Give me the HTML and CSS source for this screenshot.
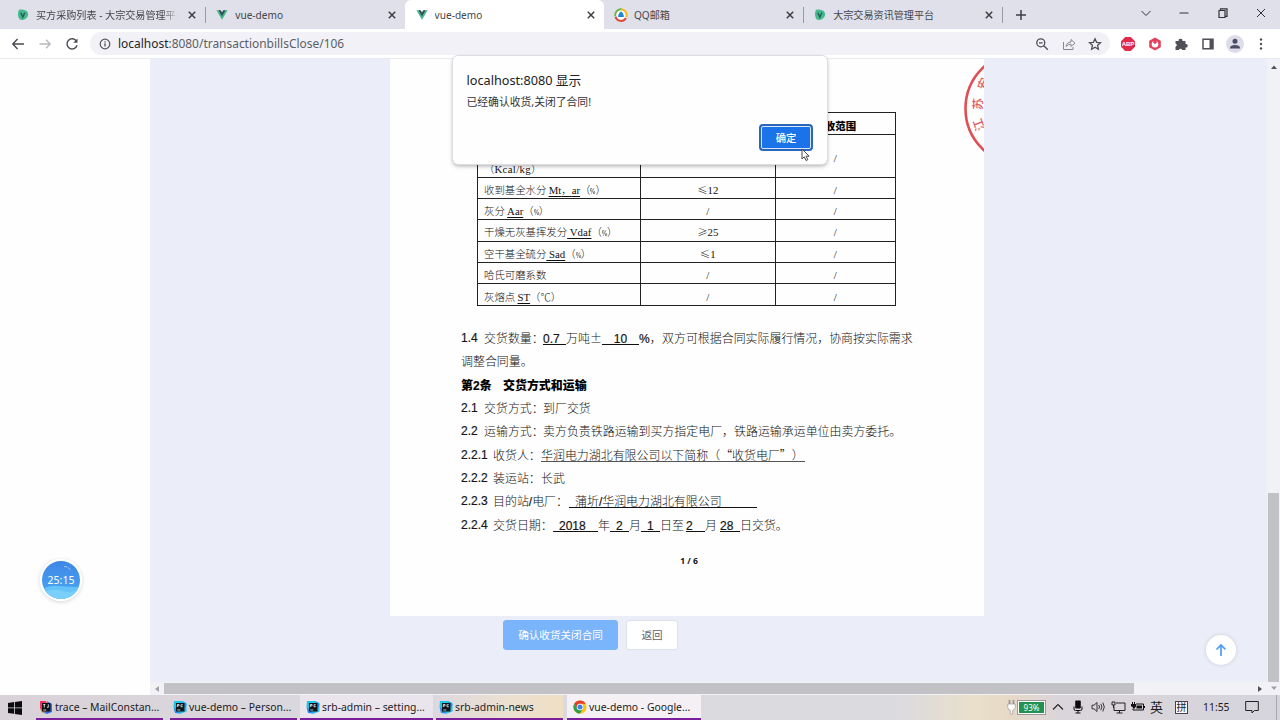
FILE: index.html
```html
<!DOCTYPE html>
<html lang="zh-CN">
<head>
<meta charset="utf-8">
<title>vue-demo</title>
<link rel="stylesheet" href="styles.css">
</head>
<body>
<svg class="defs" width="0" height="0">
  <symbol id="x" viewBox="0 0 10 10"><path d="M1.800 1.800l6.400 6.400M8.200 1.800L1.800 8.200" stroke="#3c3e44" stroke-width="1.500" fill="none"/></symbol>
  <symbol id="vue" viewBox="0 0 14 12"><path d="M0.500 0.500h4L7 4.500l2.500-4h4L7 11.500z" fill="#42b883"/><path d="M3 .5h2.500L7 3 8.500.5H11L7 7.500z" fill="#35495e"/></symbol>
  <symbol id="blob" viewBox="0 0 12 12"><path d="M2 .8Q7 0 10 2.200Q12.500 6 9.500 9Q6 12 2.500 10.200Q-.3 6 2 .8z" fill="#45b88c"/><path d="M3.800 3.700L5.800 8l2-4.300" stroke="#245c56" stroke-width="1.400" fill="none"/></symbol>
  <symbol id="pc" viewBox="0 0 14 14"><path d="M1 3l4-2 1 3z" fill="#1f8fe8"/><path d="M1 1h8l4.500 2v8.500L8 13.500 2 12 .5 6z" fill="#20c5e8"/><path d="M9 1l4.500 3-1 4zM.5 7L2 13l6 .8z" fill="#2390f0"/><rect x="3" y="3" width="8.500" height="8.500" fill="#10151b"/><path d="M4.300 7V4.500h1.800v1.300H4.300M9.800 4.700H8v2h1.800M4.300 10h3" stroke="#e8f4f5" stroke-width=".8" fill="none"/></symbol>
</svg>

<header class="tabs">
  <div class="tab"><svg class="fav"><use href="#blob"/></svg><span class="name fade">买方采购列表 - 大宗交易管理平台</span><svg class="close"><use href="#x"/></svg></div>
  <div class="tab plain"><svg class="fav"><use href="#vue"/></svg><span class="name">vue-demo</span><svg class="close"><use href="#x"/></svg></div>
  <div class="tab active"><svg class="fav"><use href="#vue"/></svg><span class="name">vue-demo</span><svg class="close"><use href="#x"/></svg></div>
  <div class="tab"><svg class="fav big" viewBox="0 0 14 14"><circle cx="7" cy="7" r="6.500" fill="#fff"/><g fill="none" stroke-width="2"><path d="M1.300 8A5.700 5.700 0 0 1 8 1.400" stroke="#6cb33e"/><path d="M7 1.300A5.700 5.700 0 0 1 12.300 9" stroke="#f5b322"/><path d="M12 10A5.700 5.700 0 0 1 1.500 8.500" stroke="#dc4a32"/></g><path d="M7 3.500q3 2 2.800 5.500H4.200Q4 5.500 7 3.500z" fill="#1d86d8"/></svg><span class="name">QQ邮箱</span><svg class="close"><use href="#x"/></svg></div>
  <div class="tab"><svg class="fav"><use href="#blob"/></svg><span class="name">大宗交易资讯管理平台</span><svg class="close"><use href="#x"/></svg></div>
  <svg class="plus" viewBox="0 0 12 12"><path d="M6 1v10M1 6h10" stroke="#3c3e44" stroke-width="1.500"/></svg>
  <div class="win">
    <svg viewBox="0 0 12 12"><path d="M1.500 4L6 8.500 10.500 4" /></svg>
    <svg viewBox="0 0 12 12"><path d="M1.500 6h9"/></svg>
    <svg viewBox="0 0 12 12"><path d="M2 3.500h6v7H2zM3.500 3.500V1.800h6.500v7.500H8" stroke-width="1.200"/></svg>
    <svg viewBox="0 0 12 12"><path d="M2 2l8 8M10 2l-8 8"/></svg>
  </div>
</header>

<div class="toolbar">
  <div class="nav">
    <svg viewBox="0 0 14 14"><path d="M13 7H2M6.500 2L1.800 7l4.700 5" stroke="#4a4c52"/></svg>
    <svg viewBox="0 0 14 14"><path d="M1.500 7h10.500M8 2.800L12.200 7 8 11.200" stroke="#b9bac0"/></svg>
    <svg viewBox="0 0 14 14"><path d="M11.300 4A5.100 5.100 0 1 0 12 8.200" stroke="#4a4c52"/><path d="M12.500 1.500v4.200H8.300z" fill="#4a4c52" stroke="none"/></svg>
  </div>
  <div class="omnibox">
    <svg class="info" viewBox="0 0 12 12"><circle cx="6" cy="6" r="4.800" fill="none" stroke="#55575d" stroke-width="1.200"/><path d="M6 5.300v3.200M6 3.300v1.200" stroke="#55575d" stroke-width="1.300"/></svg>
    <span class="url"><b>localhost</b>:8080/transactionbillsClose/106</span>
    <div class="tools">
      <svg viewBox="0 0 14 14"><circle cx="5.800" cy="5.800" r="4"/><path d="M8.800 8.800l4 4M4 5.800h3.600"/></svg>
      <svg viewBox="0 0 14 14"><path d="M1.500 5v7.500h9.500V10M4 9.500q.8-4.300 5-4.500V2.500L13 6.200 9 9.500V7.200Q6 7 4 9.500z" stroke="#85878d" stroke-width="1"/></svg>
      <svg viewBox="0 0 14 14"><path d="M7 1.800l1.600 3.500 3.900.4-2.900 2.600.8 3.900L7 10.200l-3.400 2 .8-3.900L1.500 5.700l3.900-.4z"/></svg>
    </div>
  </div>
  <div class="ext">
    <svg viewBox="0 0 14 14"><path d="M4.200 0h5.600L14 4.200v5.600L9.800 14H4.200L0 9.800V4.200z" fill="#e02a4c"/><text x="7" y="9.300" text-anchor="middle">ABP</text></svg>
    <svg viewBox="0 0 14 14"><path d="M7 .5l5.800 3.200v6.600L7 13.500 1.200 10.300V3.700z" fill="#e5405c"/><circle cx="7" cy="7.200" r="3.300" fill="#fff"/><path d="M5.300 2h3.400v3.500L7 7.300 5.300 5.500z" fill="#e5405c"/></svg>
    <svg viewBox="0 0 14 14"><path d="M1.500 4h3.200a1.900 1.900 0 1 1 3.700 0H11.500v3a1.800 1.800 0 1 1 0 3.500v2.500H8.200a1.700 1.700 0 0 0-3.300 0H1.500V9.700a1.700 1.700 0 0 0 0-3.300z" fill="#505158"/></svg>
    <svg viewBox="0 0 14 14"><path d="M2 2.200h10v9.600H2z" fill="#fff" stroke="#505158" stroke-width="1.500"/><path d="M8.500 2.200H12v9.600H8.500z" fill="#505158"/></svg>
    <svg class="user" viewBox="0 0 18 18"><circle cx="9" cy="9" r="9" fill="#dddde9"/><circle cx="9" cy="6.200" r="2.500" fill="#4b4d63"/><path d="M4 13.500v-1Q4.500 10 9 10t5 2.500v1z" fill="#4b4d63"/></svg>
    <svg viewBox="0 0 14 14" fill="#505158"><circle cx="7" cy="2.500" r="1.200"/><circle cx="7" cy="7" r="1.200"/><circle cx="7" cy="11.500" r="1.200"/></svg>
  </div>
</div>

<main class="view">
  <aside class="side"></aside>
  <section class="stage">
    <div class="content">
      <article class="paper">
        <svg class="stamp" width="22" height="100" viewBox="962 59 22 100">
          <circle cx="1022" cy="108.500" r="56.500" fill="none" stroke="#df4d55" stroke-width="2.600"/>
          <g fill="#df5a60"><text transform="translate(985 91) rotate(-66)">安</text><text transform="translate(982 110) rotate(-88)">苏</text><text transform="translate(985 129) rotate(-110)">江</text></g>
        </svg>
        <table class="spec">
          <tr class="head"><th></th><th></th><th>拒收范围</th></tr>
          <tr class="tall"><td class="unit">（<i>Kcal/kg</i>）</td><td></td><td><i>/</i></td></tr>
          <tr><td>收到基全水分 <u><i>Mt</i>，<i>ar</i></u>（<i class="pct">%</i>）</td><td>≤<i>12</i></td><td><i>/</i></td></tr>
          <tr><td>灰分 <u><i>Aar</i></u>（<i class="pct">%</i>）</td><td><i>/</i></td><td><i>/</i></td></tr>
          <tr><td>干燥无灰基挥发分<u><i>&nbsp;Vdaf</i></u>（<i class="pct">%</i>）</td><td>≥<i>25</i></td><td><i>/</i></td></tr>
          <tr><td>空干基全硫分<u><i>&nbsp;Sad</i></u>（<i class="pct">%</i>）</td><td>≤<i>1</i></td><td><i>/</i></td></tr>
          <tr><td>哈氏可磨系数</td><td><i>/</i></td><td><i>/</i></td></tr>
          <tr><td>灰熔点 <u><i>ST</i></u>（℃）</td><td><i>/</i></td><td><i>/</i></td></tr>
        </table>
        <div class="clauses">
          <p class="qty"><b>1.4</b><span>交货数量：</span><u><b>0.7</b></u><span>万吨±</span><u class="mid"><b>10</b></u><span><b>%</b>，</span><span>双方可根据合同实际履行情况，协商按实际需求</span></p>
          <p><span>调整合同量。</span></p>
          <p class="title"><span>第<b>2</b>条</span><span>交货方式和运输</span></p>
          <p class="two"><b>2.1</b><span>交货方式：</span><span>到厂交货</span></p>
          <p class="two"><b>2.2</b><span>运输方式：</span><span>卖方负责铁路运输到买方指定电厂，铁路运输承运单位由卖方委托。</span></p>
          <p class="three"><b>2.2.1</b><span>收货人：</span><u class="thin">华润电力湖北有限公司以下简称（<span class="ql">“</span>收货电厂<span class="qr">”</span>）</u></p>
          <p class="three"><b>2.2.2</b><span>装运站：</span><span>长武</span></p>
          <p class="dest"><b>2.2.3</b><span>目的站<b>/</b>电厂：</span><u class="pad">蒲圻<b>/</b>华润电力湖北有限公司</u></p>
          <p class="date"><b>2.2.4</b><span>交货日期：</span><u class="pad"><b>2018</b></u><span>年</span><u class="pad"><b>2</b></u><span>月</span><u class="pad"><b>1</b></u><span>日至</span><u><b>2</b></u><span>月</span><u><b>28</b></u><span>日交货。</span></p>
        </div>
        <footer>1 / 6</footer>
      </article>
      <div class="actions"><button class="primary">确认收货关闭合同</button><button>返回</button></div>
    </div>
    <div class="hbar"><svg viewBox="0 0 8 8"><path d="M6 1v6L2 4z" fill="#a0a0a6"/></svg><span class="track"><span class="thumb"></span></span><svg viewBox="0 0 8 8"><path d="M2 1v6l4-3z" fill="#505056"/></svg></div>
  </section>
  <div class="vbar"><svg viewBox="0 0 8 8"><path d="M1 6h6L4 2.500z" fill="#505056"/></svg><span class="thumb"></span><svg viewBox="0 0 8 8"><path d="M1 2.500h6L4 6z" fill="#a0a0a6"/></svg></div>
</main>

<div class="dialog">
  <h1>localhost:8080 显示</h1>
  <p>已经确认收货,关闭了合同!</p>
  <button>确定</button>
</div>
<svg class="cursor" viewBox="0 0 10 14"><path d="M1 1v10l2.300-2.200 1.700 3.700 1.800-.8-1.700-3.500h3z" fill="#fff" stroke="#333" stroke-width=".9"/></svg>

<div class="timer"><svg viewBox="0 0 38 38"><defs><linearGradient id="sky" x2="0" y2="1"><stop offset="0" stop-color="#3f86e6"/><stop offset="1" stop-color="#4aa9f2"/></linearGradient><clipPath id="disc"><circle cx="19" cy="19" r="19"/></clipPath></defs><g clip-path="url(#disc)"><path d="M0 0h38v38H0z" fill="url(#sky)"/><path d="M0 28q8-4 17-3t21 1v12H0z" fill="#66c3fa"/><path d="M3 31q8-4 17-1t18-2v10H3z" fill="#7bcffb"/></g><path d="M22 5.500q4 0 7 4" stroke="#a9d0fa" stroke-dasharray="3 1" fill="none"/></svg><span>25:15</span></div>
<div class="totop"><svg viewBox="0 0 14 14"><path d="M7 13V2M2.500 6.500L7 2l4.500 4.500" fill="none" stroke="#4b9cf5" stroke-width="1.700"/></svg></div>

<footer class="taskbar">
  <svg class="start" viewBox="0 0 14 14"><path d="M0 2l6-.9v5.400H0zM6.800 1L14 0v6.500H6.800zM0 7.300h6v5.500L0 12zM6.800 7.300H14V14l-7.200-1z" fill="#0b0b0d"/></svg>
  <div class="task t1"><svg viewBox="0 0 14 14"><path d="M1 1h6l2 6-6 5-2-4z" fill="#f0345f"/><path d="M8 1l5 3v8l-5 2-5-2 6-5z" fill="#2a72ee"/><path d="M1 9l3 4 3-1z" fill="#f78b2c"/><rect x="3" y="3" width="8.500" height="8.500" fill="#111"/><path d="M4.300 4.500h2M5.300 4.500v3M9.300 4.300v3H8M4.300 10h3" stroke="#fff" stroke-width=".8" fill="none"/></svg><span>trace – MailConstan...</span></div>
  <div class="task t2"><svg><use href="#pc"/></svg><span>vue-demo – Person...</span></div>
  <div class="task t3"><svg><use href="#pc"/></svg><span>srb-admin – setting...</span></div>
  <div class="task t4"><svg><use href="#pc"/></svg><span>srb-admin-news</span></div>
  <div class="task t5"><svg viewBox="0 0 14 14"><circle cx="7" cy="7" r="6.600" fill="#fbc116"/><path d="M1.300 3.700A6.600 6.600 0 0 1 12.700 3.700H7L4.200 8.600z" fill="#e2402f"/><path d="M1.300 3.700L4.200 8.600 7 10.200 9.800 8.600 7 13.600A6.600 6.600 0 0 1 1.300 3.700z" fill="#2f9e4f"/><circle cx="7" cy="7" r="3.200" fill="#fff"/><circle cx="7" cy="7" r="2.500" fill="#3f7fe8"/></svg><span>vue-demo - Google...</span></div>
  <div class="tray">
    <svg class="plug" viewBox="0 0 9 16"><path d="M2.500 1v4M6.500 1v4" stroke="#999" stroke-width="1.800"/><path d="M.8 5h7.400v3.500q-.5 2.500-2.500 2.700V15H3.300v-3.800Q1.300 11 .8 8.500z" fill="#fff" stroke="#999" stroke-width=".7"/></svg>
    <span class="power">93%</span>
    <svg class="up" viewBox="0 0 12 12"><path d="M1 8.500L6 3.500l5 5" fill="none" stroke="#222" stroke-width="1.100"/></svg>
    <svg class="mic" viewBox="0 0 10 14"><rect x="2.200" y="0.500" width="5.600" height="8" rx="1" fill="#0b0b0d"/><path d="M1 6.500V9q0 1.500 1.500 1.500h5Q9 10.500 9 9V6.500M5 10.500V13M2.500 13h5" fill="none" stroke="#0b0b0d"/></svg>
    <svg class="vol" viewBox="0 0 14 12"><path d="M1 4.200h2L6 1.500v9L3 7.800H1zM7.800 4q1.400 2 0 4M9.800 2.800q2.200 3.200 0 6.400M11.800 1.500q3 4.500 0 9" fill="none" stroke="#222" stroke-width=".9"/></svg>
    <svg class="net" viewBox="0 0 15 13"><path d="M5 2h9v7.500H3V5.500M8.500 9.500V12M5.500 12h6M1 1h3v3H1zM2.500 4v3" fill="none" stroke="#222"/></svg>
    <svg class="bat" viewBox="0 0 14 12"><path d="M5 3h7.500v6H2V7.500" fill="none" stroke="#111"/><path d="M5.500 4.500H11v3H5.500zM13 5h1v2h-1zM0 3h5v2.500L3 8 1 5.500H0zM1 1h1v2H1zM3 1h1v2H3z" fill="#111"/></svg>
    <span class="lang">英</span><span class="ime">拼</span><span class="clock">11:55</span>
    <svg class="note" viewBox="0 0 14 14"><path d="M.7 1.500h12.600v9H9.500L7 13V10.500H.7z" fill="none" stroke="#222"/></svg>
    <i class="peek"></i>
  </div>
</footer>
</body>
</html>
```
FILE: styles.css
```css
* { box-sizing: border-box; }
body { margin: 0; width: 1280px; height: 720px; overflow: hidden; display: flex; flex-direction: column; background: #fff; color: #34363b; font-family: "Noto Sans", "Noto Sans CJK SC", sans-serif; font-size: 10.5px; }
svg { display: block; flex: none; }
.defs { display: none; }
p, h1 { margin: 0; }
button { font: inherit; }

.tabs { height: 29px; flex: none; display: flex; align-items: stretch; padding-left: 6px; background: #dfe0e9; }
.tab { width: 199.300px; display: flex; align-items: center; padding: 0 7px 0 11px; position: relative; border-right: 1px solid transparent; }
.tab::after { content: ""; position: absolute; right: -2px; top: 7px; width: 1px; height: 16px; background: #999aa3; }
.tab.plain::after, .tab.active::after { display: none; }
.tab.active { background: #fff; border-radius: 6px 6px 0 0; }
.fav { width: 12px; height: 12px; }
.fav.big { width: 14px; height: 14px; margin: 0 -1px; }
.name { flex: 1; margin-left: 7px; white-space: nowrap; overflow: hidden; font-size: 10.100px; color: #44464c; }
.fade { margin-right: 8px; -webkit-mask-image: linear-gradient(90deg, #000 88%, transparent); mask-image: linear-gradient(90deg, #000 88%, transparent); }
.close { width: 10px; height: 10px; }
.plus { width: 12px; height: 12px; align-self: center; margin-left: 13px; }
.win { margin-left: auto; display: flex; gap: 26.300px; padding: 7px 13px 0 0; }
.win svg { width: 12px; height: 12px; fill: none; stroke: #303238; }

.toolbar { height: 29px; flex: none; display: flex; align-items: center; background: #fff; padding-left: 11px; }
.nav { display: flex; gap: 13px; width: 79px; }
.nav svg { width: 14px; height: 14px; fill: none; stroke-width: 1.400; }
.omnibox { width: 1020px; height: 23px; border-radius: 12px; background: #f1f1f7; display: flex; align-items: center; padding: 0 8px; }
.info { width: 12px; height: 12px; margin: 0 7px 0 1px; }
.url { font-size: 11.950px; color: #5c5e65; }
.url b { font-weight: 400; color: #24262b; }
.tools { margin-left: auto; display: flex; gap: 12.500px; }
.tools svg { width: 14px; height: 14px; fill: none; stroke: #4d4f55; stroke-width: 1.300; }
.ext { display: flex; align-items: center; gap: 12.700px; margin-left: 11px; }
.ext svg { width: 14px; height: 14px; }
.ext .user { width: 18px; height: 18px; margin: 0 -2px; }
.ext text { font: bold 6px "Liberation Sans", sans-serif; fill: #fff; }

.view { height: 637px; flex: none; display: flex; border-top: 1px solid #e9e9f2; }
.side { width: 150px; background: #fefefe; }
.stage { width: 1117px; background: #ebedf8; display: flex; flex-direction: column; }
.content { flex: 1; padding-left: 240px; }
.paper { width: 594px; height: 557px; background: #fefefe; padding: 53px 0 0 87px; position: relative; color: #111; font-family: "Noto Sans CJK SC", sans-serif; }
.stamp { position: absolute; right: 0; top: 0; }
.stamp text { font: 500 12px "Noto Sans CJK SC", sans-serif; }
.spec { width: 419px; table-layout: fixed; border-collapse: collapse; font-size: 10.400px; font-weight: 300; line-height: 14px; }
.spec th, .spec td { border: 1px solid #222; padding: 4px 0 0; text-align: center; }
.spec tr { height: 21.400px; }
.spec .head { height: 22px; }
.spec .head th { font-weight: 900; color: #000; }
.spec .tall { height: 42.500px; }
.spec .tall .unit { vertical-align: bottom; padding-bottom: 1px; }
.spec .unit i { letter-spacing: .35px; }
.spec th:nth-child(1) { width: 163px; }
.spec th:nth-child(2) { width: 134.500px; }
.spec td:first-child { text-align: left; padding-left: 6px; white-space: pre; }
.spec i { font: 400 10.800px/12px "Liberation Serif", serif; }
.spec .pct { display: inline-block; font-size: 9px; width: 5.200px; transform: scaleX(.72); transform-origin: 0 50%; }
.spec u { text-underline-offset: 2px; }

.clauses { padding-top: 20.500px; margin-left: -4px; font-size: 11.950px; font-weight: 300; }
.clauses p { display: grid; height: 23.350px; margin-left: -12px; white-space: nowrap; align-items: start; padding-top: 5.500px; line-height: 12px; }
.clauses b { font: 400 12px/12px "Liberation Sans", sans-serif; -webkit-text-stroke: .2px #222; }
.clauses u { text-decoration: none; height: 13px; border-bottom: 1.500px solid #111; }
.clauses .thin { border-bottom: 1px solid #555; }
.ql, .qr { display: inline-block; width: 12px; }
.ql { text-align: right; }
.clauses .mid { text-align: center; }
.clauses .pad { padding-left: 6px; }
.clauses .qty { grid-template-columns: 23px 59px 23px 36px 37px 23px auto; }
.clauses .title { grid-template-columns: 42px auto; font-weight: 900; color: #000; }
.clauses .title b { font-weight: 700; }
.clauses .two { grid-template-columns: 23px 59px auto; }
.clauses .three { grid-template-columns: 32px 48px 264px; }
.clauses .dest { grid-template-columns: 32px 76px 188px; }
.clauses .date { grid-template-columns: 32px 60px 45px 12px 19px 12px 19px 26px 19px 15px 20px auto; }
.paper footer { margin: 18px 0 0 -87px; padding-left: 4px; text-align: center; font: 700 8.500px/14px "Open Sans", sans-serif; color: #111; }
.actions { display: flex; gap: 8px; padding: 4px 0 0 113px; }
.actions button { width: 52px; height: 30px; padding: 0 0 1px; border: 1px solid #dfe1ea; border-radius: 3px; background: #fff; color: #606266; font-size: 10.600px; }
.actions .primary { width: 115px; border-color: #7ab4fa; background: #7ab4fa; color: #fff; }

.hbar { height: 13px; display: flex; align-items: center; background: #f2f2f6; }
.hbar svg { width: 8px; height: 8px; margin: 0 3px; }
.track { flex: 1; height: 11px; }
.hbar .thumb { display: block; width: 970px; height: 11px; background: #c1c1c6; }
.vbar { width: 13px; background: #f2f2f6; display: flex; flex-direction: column; align-items: center; padding: 4px 0 3px; }
.vbar svg { width: 8px; height: 8px; }
.vbar .thumb { width: 11px; height: 189px; margin: auto 0 2px; background: #c1c1c6; }

.dialog { position: absolute; left: 453px; top: 56px; width: 374px; height: 108px; padding: 15px 14px 0 13.500px; border-radius: 5px; background: #fefefe; box-shadow: 0 0 0 1px #dcdce3, 0 2px 4px #0005; }
.dialog h1 { font-size: 12.700px; line-height: 18px; font-weight: 400; color: #202226; }
.dialog p { margin-top: 5px; line-height: 16px; font-size: 10.800px; color: #34363b; }
.dialog button { display: block; width: 54px; height: 27px; margin: 13.500px 0 0 auto; padding: 0; border: 2px solid #2a67ba; outline: 1px solid #d6e6fc; outline-offset: -3px; border-radius: 4px; background: #1a73e8; color: #fff; font-size: 10.300px; font-weight: 500; }
.cursor { position: absolute; left: 801px; top: 148px; width: 10px; height: 14px; }
.timer { position: absolute; left: 40px; top: 559px; width: 42px; height: 42px; border: 2px solid #fff; border-radius: 50%; box-shadow: 0 1px 4px #8884a055; display: grid; place-items: center; color: #fff; font-size: 10.500px; }
.timer > * { grid-area: 1 / 1; }
.timer svg { width: 38px; height: 38px; }
.totop { position: absolute; left: 1206px; top: 635px; width: 30px; height: 30px; border-radius: 50%; background: #fff; box-shadow: 0 0 4px #0002; display: grid; place-items: center; }
.totop svg { width: 14px; height: 14px; }

.taskbar { height: 25px; flex: none; display: flex; background: linear-gradient(90deg, #d9d2d8, #dad8de 300px, #dbdade 900px, #e9dfca 975px, #e7d9c6 1010px, #dad5da 1060px, #d5d4dc); color: #1b1b1e; font-size: 10.400px; }
.start { width: 14px; height: 14px; margin: 6px 14px 0 8px; }
.task { display: flex; align-items: center; gap: 2px; padding-left: 3px; border-bottom: 2px solid #7c1d9c; white-space: nowrap; }
.task svg { width: 14px; height: 14px; }
.t1 { width: 127px; margin-right: 7px; }
.t2 { width: 127px; margin-right: 3px; }
.t3 { width: 133px; margin-right: 3px; padding-left: 6px; background: #eae5ec; }
.t4 { width: 127px; margin-right: 4px; background: linear-gradient(90deg, #ded8df, #ece0cf 60%, #eedfc3); }
.t5 { width: 134px; padding-left: 6px; background: #f4f0f3; }
.tray { margin-left: auto; display: flex; align-items: center; padding-bottom: 1px; }
.plug { width: 9px; height: 16px; margin-right: 2px; }
.power { width: 27px; height: 13px; border: 1px solid #fff; outline: 1px solid #999; background: #239150; color: #fff; font-size: 8px; line-height: 11px; text-align: center; }
.up { width: 12px; height: 12px; margin-left: 7px; }
.mic { width: 10px; height: 14px; margin-left: 9px; }
.vol { width: 14px; height: 12px; margin-left: 8px; }
.net { width: 15px; height: 13px; margin-left: 6px; }
.bat { width: 14px; height: 12px; margin-left: 5px; }
.lang { font-size: 13px; line-height: 16px; margin-left: 5px; }
.ime { margin-left: 12px; width: 13px; height: 13px; border: 1px solid #444; background: #fafafa; font-size: 10px; line-height: 11px; display: flex; justify-content: center; }
.clock { margin-left: 15px; width: 28px; }
.note { width: 14px; height: 14px; margin-left: 14px; }
.peek { width: 1px; height: 25px; margin: 0 3px 0 17px; background: #aaa8b0; }
```
